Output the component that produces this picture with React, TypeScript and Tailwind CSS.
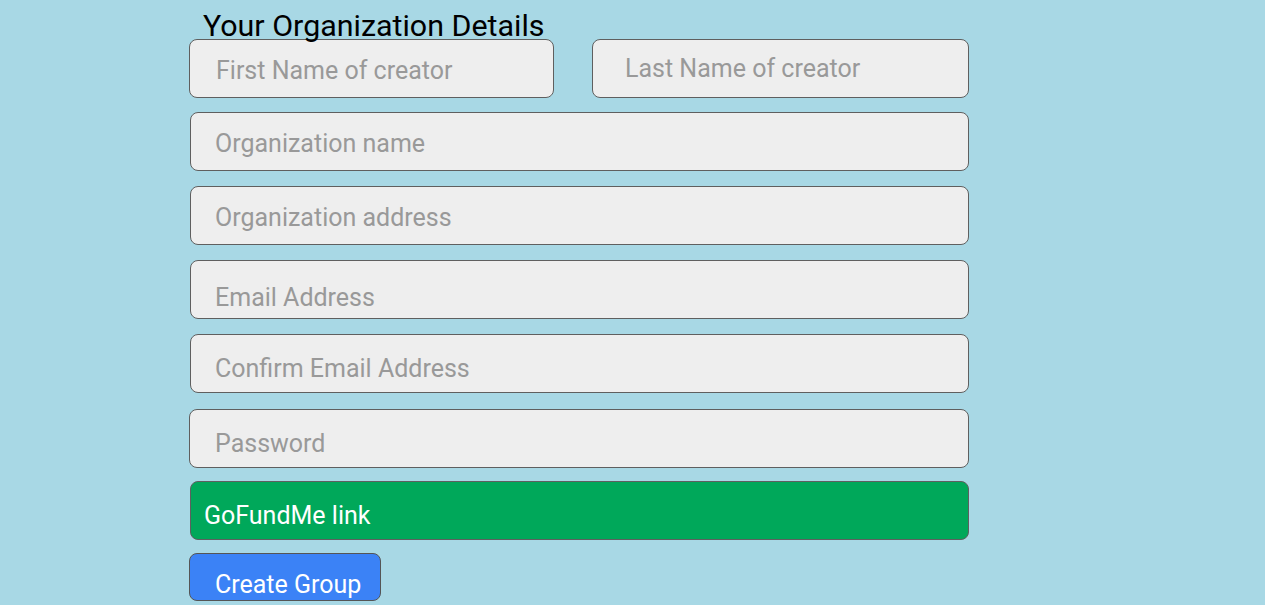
import React from 'react'

const field =
  'h-[59px] rounded-lg border border-[#5f5f5f] bg-[#eeeeee] text-[25px] text-[#333] placeholder:text-[#999] outline-none'

export default function App() {
  return (
    <div className="min-h-[605px] bg-[#a8d8e5] font-['Roboto',sans-serif]">
      <form className="ml-[189px] flex w-[780px] flex-col">
        <h1 className="relative z-10 h-[39px] pl-[14px] pt-[11px] text-[30.4px] leading-[30px] text-black">
          Your Organization Details
        </h1>
        <div className="flex items-center">
          <input className={`${field} w-[365px] pl-[26px] pt-[4px]`} placeholder="First Name of creator" />
          <input className={`${field} ml-[38px] w-[377px] pl-[32px]`} placeholder="Last Name of creator" />
        </div>
        <input className={`${field} mt-[14px] ml-[1px] w-[779px] pl-[24px] pt-[3px]`} placeholder="Organization name" />
        <input className={`${field} mt-[15px] ml-[1px] w-[779px] pl-[24px] pt-[3px]`} placeholder="Organization address" />
        <input className={`${field} mt-[15px] ml-[1px] w-[779px] pl-[24px] pt-[16px]`} placeholder="Email Address" />
        <input className={`${field} mt-[15px] ml-[1px] w-[779px] pl-[24px] pt-[10px]`} placeholder="Confirm Email Address" />
        <input className={`${field} mt-[16px] w-[780px] pl-[25px] pt-[10px]`} placeholder="Password" />
        <input
          className="mt-[13px] ml-[1px] h-[59px] w-[779px] rounded-lg border border-[#5f5f5f] bg-[#00a85a] pl-[13px] pt-[10px] text-[25px] text-white placeholder:text-white outline-none"
          placeholder="GoFundMe link"
        />
        <button
          type="button"
          className="mt-[13px] h-[48px] w-[192px] rounded-lg border border-[#555] bg-[#3b82f6] pt-[16px] text-left pl-[25px] text-[25px] leading-[30px] text-white"
        >
          Create Group
        </button>
      </form>
    </div>
  )
}
